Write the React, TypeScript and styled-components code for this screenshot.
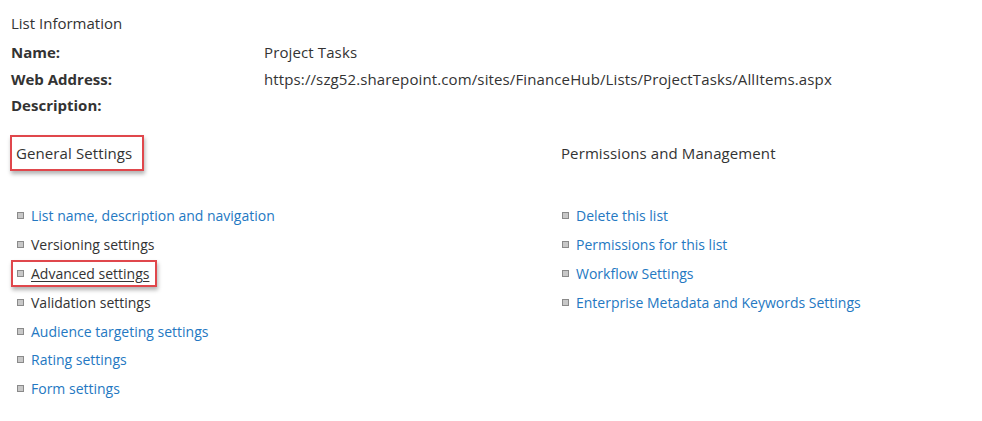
import styled, { createGlobalStyle } from 'styled-components';

// 목록 설정 페이지: 목록 정보 + 두 개의 설정 컬럼

const GlobalStyle = createGlobalStyle`
  html, body {
    margin: 0;
    padding: 0;
    background: #ffffff;
  }
  body {
    font-family: "Open Sans", "Noto Sans", "Liberation Sans", sans-serif;
    color: #333333;
  }
`;

const Page = styled.div`
  width: 982px;
  height: 421px;
  padding: 12px 0 0 11px;
  box-sizing: border-box;
`;

const SectionTitle = styled.h2`
  margin: 0;
  font-size: 15px;
  font-weight: 400;
  line-height: 22px;
  color: #333333;
`;

const InfoTable = styled.div`
  display: grid;
  grid-template-columns: 253px 1fr;
  grid-auto-rows: 26.5px;
  margin-top: 5px;
  align-items: center;
`;

const Label = styled.div`
  font-size: 15px;
  font-weight: 700;
  color: #333333;
`;

const Value = styled.div`
  font-size: 15px;
  letter-spacing: 0.12px;
  color: #333333;
`;

const Columns = styled.div`
  display: grid;
  grid-template-columns: 545px 1fr;
  margin-top: 16px;
`;

const Column = styled.div`
  display: flex;
  flex-direction: column;
`;

const Heading = styled.div<{ $boxed?: boolean }>`
  align-self: flex-start;
  font-size: 15px;
  line-height: 22px;
  letter-spacing: 0.1px;
  color: #333333;
  padding: 5px 10px 5px 4px;
  border: 2px solid ${(p) => (p.$boxed ? '#e0474c' : 'transparent')};
  margin-left: -1px;
  box-shadow: ${(p) => (p.$boxed ? '1px 3px 4px rgba(0, 0, 0, 0.3)' : 'none')};
`;

const LinkList = styled.ul`
  list-style: none;
  margin: 31px 0 0;
  padding: 0;
`;

const Item = styled.li`
  display: flex;
  align-items: center;
  height: 28.8px;
`;

const ItemBox = styled.span<{ $boxed?: boolean }>`
  display: inline-flex;
  align-items: center;
  box-sizing: border-box;
  height: 27px;
  padding: 0 6px 0 4px;
  border: 2px solid ${(p) => (p.$boxed ? '#e0474c' : 'transparent')};
  box-shadow: ${(p) => (p.$boxed ? '1px 3px 4px rgba(0, 0, 0, 0.3)' : 'none')};
`;

const Bullet = styled.i`
  display: inline-block;
  width: 5px;
  height: 5px;
  background: #c8c8c8;
  border: 1px solid #8a8a8a;
  margin-right: 7px;
`;

const ItemLink = styled.a<{ $plain?: boolean; $underline?: boolean }>`
  font-size: 14px;
  color: ${(p) => (p.$plain || p.$underline ? '#333333' : '#2478c2')};
  text-decoration: ${(p) => (p.$underline ? 'underline' : 'none')};
  text-underline-offset: 2px;
  cursor: pointer;
`;

interface Setting {
  label: string;
  plain?: boolean;
  boxed?: boolean;
}

const general: Setting[] = [
  { label: 'List name, description and navigation' },
  { label: 'Versioning settings', plain: true },
  { label: 'Advanced settings', boxed: true },
  { label: 'Validation settings', plain: true },
  { label: 'Audience targeting settings' },
  { label: 'Rating settings' },
  { label: 'Form settings' },
];

const permissions: Setting[] = [
  { label: 'Delete this list' },
  { label: 'Permissions for this list' },
  { label: 'Workflow Settings' },
  { label: 'Enterprise Metadata and Keywords Settings' },
];

function SettingsList({ items }: { items: Setting[] }) {
  return (
    <LinkList>
      {items.map((item) => (
        <Item key={item.label}>
          <ItemBox $boxed={item.boxed}>
            <Bullet />
            <ItemLink $plain={item.plain} $underline={item.boxed}>
              {item.label}
            </ItemLink>
          </ItemBox>
        </Item>
      ))}
    </LinkList>
  );
}

function App() {
  return (
    <Page>
      <GlobalStyle />
      <SectionTitle>List Information</SectionTitle>
      <InfoTable>
        <Label>Name:</Label>
        <Value>Project Tasks</Value>
        <Label>Web Address:</Label>
        <Value>https://szg52.sharepoint.com/sites/FinanceHub/Lists/ProjectTasks/AllItems.aspx</Value>
        <Label>Description:</Label>
        <Value />
      </InfoTable>
      <Columns>
        <Column>
          <Heading $boxed>General Settings</Heading>
          <SettingsList items={general} />
        </Column>
        <Column>
          <Heading>Permissions and Management</Heading>
          <SettingsList items={permissions} />
        </Column>
      </Columns>
    </Page>
  );
}

export default App;
